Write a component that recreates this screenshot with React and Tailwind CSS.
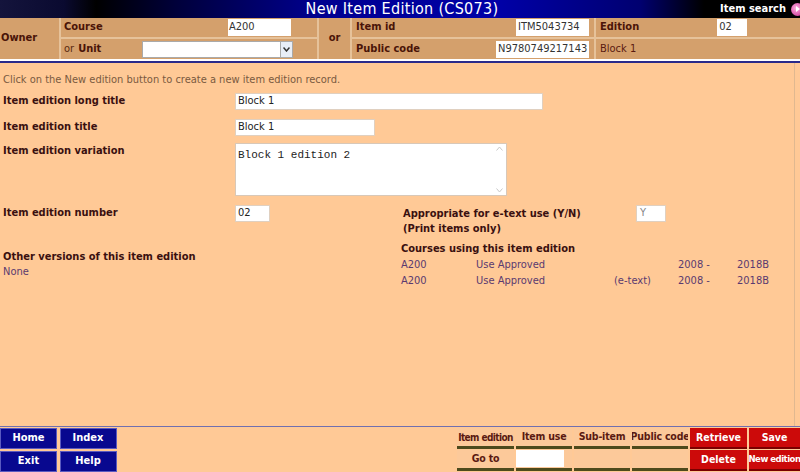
import React from "react";

const font = "font-['Tahoma','DejaVu_Sans_Condensed','DejaVu_Sans',sans-serif]";

function PeachBtn({ children, w }) {
  return (
    <div className={`${w} h-[21px] bg-[#fcc99a] border-b-[3px] border-[#4d4a1c] flex items-center justify-center whitespace-nowrap overflow-hidden text-[10.5px] tracking-[-0.2px] font-bold text-[#5a1a12]`}>
      {children}
    </div>
  );
}

function RedBtn({ children, w }) {
  return (
    <div className={`${w} h-[21px] bg-[#cc0a0a] border-b-[2px] border-[#7a0000] flex items-center justify-center whitespace-nowrap overflow-hidden text-[10.5px] font-bold text-white`}>
      {children}
    </div>
  );
}

function BlueBtn({ children }) {
  return (
    <div className="w-[57px] h-[21px] bg-[#08088f] border border-[#5a5ac0] flex items-center justify-center text-[11px] font-bold text-white">
      {children}
    </div>
  );
}

export default function App() {
  return (
    <div className={`w-[800px] h-[472px] overflow-hidden bg-[#ffc996] flex flex-col ${font} text-[11px]`}>
      {/* Title bar */}
      <div className="h-[18px] relative bg-[linear-gradient(90deg,#14143c_0%,#0a0a30_8%,#000_12%,#00003a_22%,#000090_40%,#0000a8_62%,#000070_80%,#000_88%,#000_100%)] flex items-center justify-center">
        <span className="text-white text-[16px] leading-none tracking-[0.3px] pl-[4px]">New Item Edition (CS073)</span>
        <div className="absolute right-0 top-0 h-[18px] flex items-center gap-[5px]">
          <span className="text-white font-bold text-[11px]">Item search</span>
          <span className="w-[13px] h-[13px] rounded-full bg-[radial-gradient(circle_at_40%_40%,#ffb0e0,#c0208a)] flex items-center justify-center -mr-[4px]">
            <svg width="6" height="6" viewBox="0 0 6 6"><path d="M1 0 L5 3 L1 6 Z" fill="#fff" /></svg>
          </span>
        </div>
      </div>

      {/* Owner panel */}
      <div className="h-[41px] bg-[#d4a06c] flex text-[#4a1408]">
        <div className="w-[61px] border-r-2 border-[#e6c29a] flex items-center pl-[1px] font-bold">Owner</div>
        <div className="w-[258px] border-r-2 border-[#e6c29a] flex flex-col">
          <div className="h-[21px] border-b-2 border-[#e6c29a] flex items-center pl-[3px]">
            <span className="font-bold">Course</span>
            <div className="ml-auto mr-[26px] w-[63px] h-[17px] bg-white flex items-center px-[1px] text-[#333]">A200</div>
          </div>
          <div className="flex-1 flex items-center pl-[3px]">
            <span className="text-[#5a2a10]">or</span>
            <span className="font-bold ml-[4px]">Unit</span>
            <div className="ml-auto mr-[24px] w-[151px] h-[17px] bg-white border border-[#aaa] flex justify-end">
              <div className="w-[12px] h-full border-l border-[#aaa] bg-[#e8eef8] flex items-center justify-center">
                <svg width="7" height="5" viewBox="0 0 7 5"><path d="M0.5 0.5 L3.5 4 L6.5 0.5" fill="none" stroke="#333" strokeWidth="1.5" /></svg>
              </div>
            </div>
          </div>
        </div>
        <div className="w-[33px] border-r-2 border-[#e6c29a] flex items-center justify-center font-bold">or</div>
        <div className="w-[244px] border-r-2 border-[#e6c29a] flex flex-col">
          <div className="h-[21px] border-b-2 border-[#e6c29a] flex items-center pl-[4px]">
            <span className="font-bold">Item id</span>
            <div className="ml-auto mr-[5px] w-[73px] h-[17px] bg-white flex items-center px-[2px] text-[#333]">ITM5043734</div>
          </div>
          <div className="flex-1 flex items-center pl-[4px]">
            <span className="font-bold">Public code</span>
            <div className="ml-auto mr-[5px] w-[93px] h-[17px] bg-white flex items-center px-[2px] text-[#333]">N9780749217143</div>
          </div>
        </div>
        <div className="flex-1 flex flex-col">
          <div className="h-[21px] border-b-2 border-[#e6c29a] flex items-center pl-[4px]">
            <span className="font-bold">Edition</span>
            <div className="ml-[78px] w-[30px] h-[17px] bg-white flex items-center px-[2px] text-[#333]">02</div>
          </div>
          <div className="flex-1 flex items-center pl-[4px] text-[#5a1a10]">Block 1</div>
        </div>
      </div>
      <div className="h-[2px] bg-white" />
      <div className="h-[2px] bg-[#2a2a8a]" />

      {/* Main content */}
      <div className="flex-1 relative border-r border-[#e0b890] mr-[5px] pl-[3px] pt-[9px] text-[#3a1010]">
        <div className="text-[#7a5a40] mb-[4px]">Click on the New edition button to create a new item edition record.</div>

        <div className="flex items-center h-[18px] mb-[8px]">
          <div className="w-[232px] font-bold">Item edition long title</div>
          <div className="w-[308px] h-[17px] bg-white border border-[#e0d0c0] flex items-center px-[2px] text-[#222]">Block 1</div>
        </div>
        <div className="flex items-center h-[18px] mb-[6px]">
          <div className="w-[232px] font-bold">Item edition title</div>
          <div className="w-[140px] h-[17px] bg-white border border-[#e0d0c0] flex items-center px-[2px] text-[#222]">Block 1</div>
        </div>
        <div className="flex items-start h-[53px] mb-[9px]">
          <div className="w-[232px] font-bold">Item edition variation</div>
          <div className="w-[272px] h-[53px] bg-white border border-[#d8c8b8] flex">
            <div className="flex-1 font-['Liberation_Mono',monospace] text-[11px] text-[#222] px-[2px] pt-[3px]">Block 1 edition 2</div>
            <div className="w-[13px] flex flex-col justify-between items-center py-[2px]">
              <svg width="7" height="5" viewBox="0 0 7 5"><path d="M0.5 4.5 L3.5 1 L6.5 4.5" fill="none" stroke="#c8c8c8" /></svg>
              <svg width="7" height="5" viewBox="0 0 7 5"><path d="M0.5 0.5 L3.5 4 L6.5 0.5" fill="none" stroke="#c8c8c8" /></svg>
            </div>
          </div>
        </div>

        <div className="flex items-start">
          <div className="w-[232px] h-[18px] flex items-center font-bold">Item edition number</div>
          <div className="w-[35px] h-[17px] bg-white border border-[#e0d0c0] flex items-center px-[2px] text-[#222]">02</div>
          <div className="ml-[133px] pt-[1px] font-bold leading-[15px]">
            <div>Appropriate for e-text use (Y/N)</div>
            <div>(Print items only)</div>
          </div>
          <div className="ml-[55px] w-[30px] h-[17px] bg-white border border-[#e0d0c0] flex items-center px-[3px] text-[#888]">Y</div>
        </div>

        <div className="flex mt-[5px]">
          <div className="w-[398px] pt-[8px] leading-[15px]">
            <div className="font-bold">Other versions of this item edition</div>
            <div className="text-[#5a3a70]">None</div>
          </div>
          <div className="leading-[15.5px] text-[#5a3a70]">
            <div className="font-bold text-[#3a1010] mb-[1px]">Courses using this item edition</div>
            {["", "(e-text)"].map((t, i) => (
              <div key={i} className="flex">
                <div className="w-[75px]">A200</div>
                <div className="w-[138px]">Use Approved</div>
                <div className="w-[64px]">{t}</div>
                <div className="w-[59px]">2008 -</div>
                <div>2018B</div>
              </div>
            ))}
          </div>
        </div>
      </div>

      {/* Bottom bar */}
      <div className="h-[1px] bg-[#7070b0]" />
      <div className="h-[1px]" />
      <div className="h-[44px] flex">
        <div className="grid grid-cols-2 gap-x-[2px] gap-y-[1px] w-[117px]">
          <BlueBtn>Home</BlueBtn>
          <BlueBtn>Index</BlueBtn>
          <BlueBtn>Exit</BlueBtn>
          <BlueBtn>Help</BlueBtn>
        </div>
        <div className="flex-1" />
        <div className="flex flex-col gap-[1px]">
          <div className="flex gap-[2px]">
            <div className="w-[57px] h-[21px] bg-[#fcc99a] border-b-[3px] border-[#4d4a1c] flex items-center justify-center whitespace-nowrap text-[10px] tracking-[-0.6px] font-bold text-[#5a1a12]">Item edition</div>
            <PeachBtn w="w-[56px]">Item use</PeachBtn>
            <PeachBtn w="w-[56px]">Sub-item</PeachBtn>
            <PeachBtn w="w-[56px]">Public code</PeachBtn>
            <RedBtn w="w-[57px]">Retrieve</RedBtn>
            <RedBtn w="w-[51px]">Save</RedBtn>
          </div>
          <div className="flex gap-[2px]">
            <PeachBtn w="w-[57px]">Go to</PeachBtn>
            <div className="w-[56px] h-[21px] bg-[#fcc99a] border-b-[3px] border-[#4d4a1c]">
              <div className="w-[48px] h-[17px] bg-white" />
            </div>
            <PeachBtn w="w-[56px]"> </PeachBtn>
            <PeachBtn w="w-[56px]"> </PeachBtn>
            <RedBtn w="w-[57px]">Delete</RedBtn>
            <div className="w-[51px] h-[21px] bg-[#cc0a0a] border-b-[2px] border-[#7a0000] flex items-center justify-center whitespace-nowrap text-[9.5px] tracking-[-0.5px] font-bold text-white">New edition</div>
          </div>
        </div>
      </div>
    </div>
  );
}
